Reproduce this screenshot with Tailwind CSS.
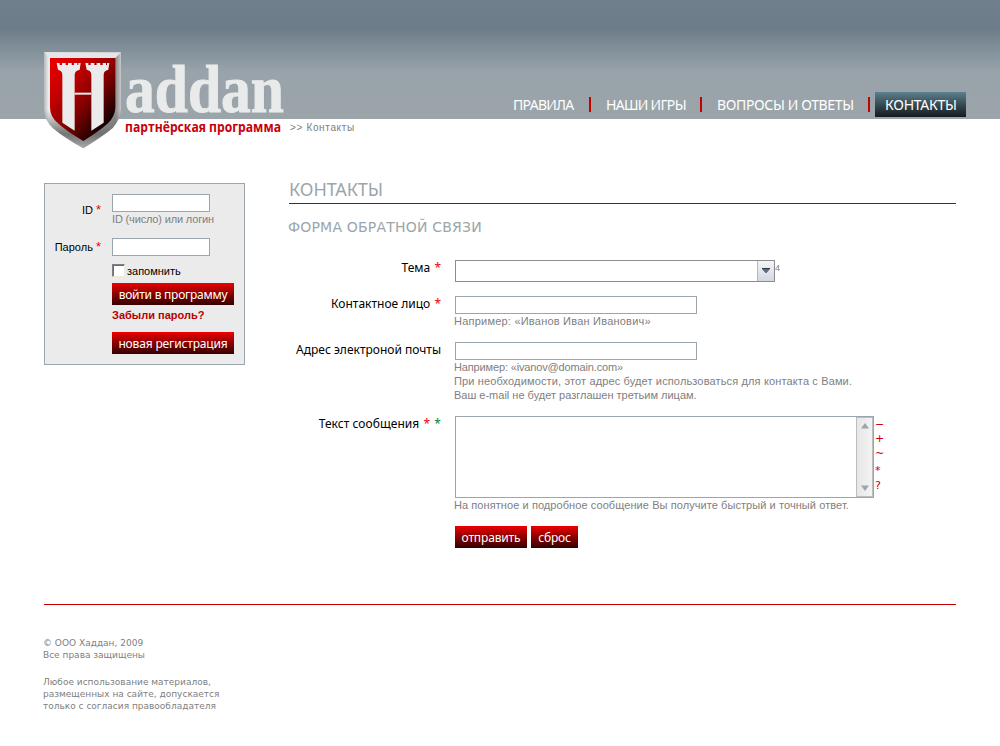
<!DOCTYPE html>
<html lang="ru">
<head>
<meta charset="utf-8">
<title>Хаддан — партнёрская программа</title>
<script src="https://cdn.jsdelivr.net/npm/@tailwindcss/browser@4"></script>
</head>
<body class="w-[1000px] h-[746px] overflow-hidden bg-white text-black whitespace-nowrap font-['Liberation_Sans',sans-serif] text-[11px]">

<header class="relative h-[119px] bg-[linear-gradient(to_bottom,#70808d_0%,#6c7d89_24%,#98a3ab_60%,#9aa3a9_78%,#9ba5a9_100%)]">
  <a class="absolute left-[40px] top-[48px] block" href="#">
    <svg width="246" height="104" viewBox="0 0 246 104" class="block overflow-visible">
      <defs>
        <linearGradient id="steel" x1="0" y1="0" x2="1" y2="0">
          <stop offset="0" stop-color="#b5b9bc"/><stop offset=".06" stop-color="#ececec"/><stop offset=".5" stop-color="#c4c4c4"/><stop offset=".93" stop-color="#8c8c8c"/><stop offset="1" stop-color="#c8c8c8"/>
        </linearGradient>
        <linearGradient id="steelDown" x1="0" y1="0" x2="0" y2="1">
          <stop offset=".6" stop-color="#777" stop-opacity="0"/><stop offset=".85" stop-color="#6a6a6a" stop-opacity=".9"/><stop offset="1" stop-color="#aaa"/>
        </linearGradient>
        <linearGradient id="enamel" x1=".1" y1="0" x2=".85" y2=".8">
          <stop offset="0" stop-color="#e60000"/><stop offset=".3" stop-color="#c40000"/><stop offset=".65" stop-color="#800000"/><stop offset="1" stop-color="#160000"/>
        </linearGradient>
      </defs>
      <g transform="translate(-10 -8) scale(.33333)">
        <path d="M42 37H273V205Q272 238 248 264Q222 286 160 325Q98 290 68 264Q42 240 42 205Z" fill="url(#steel)"/>
        <path d="M42 37H273V205Q272 238 248 264Q222 286 160 325Q98 290 68 264Q42 240 42 205Z" fill="url(#steelDown)"/>
        <path d="M42 37H273L256 54H60Z" fill="#e4e6e7"/>
        <path d="M60 54H256V202Q255 230 234 250Q210 272 160 303Q110 274 84 250Q60 230 60 202Z" fill="url(#enamel)"/>
        <g fill="#ebebeb">
          <path d="M80 69h9v6h7v-6h11v6h7v-6h11v6h7v-6h10v6h3v-6h7l-3 20Q134 92 134 105V272L97 248V105Q97 92 84 89Z"/>
          <path d="M166 69h9v6h7v-6h11v6h7v-6h11v6h7v-6h10v6h3v-6h7l-3 20Q221 92 221 105V248L184 272V105Q184 92 170 89Z"/>
          <path d="M134 158h50v6h-50z"/>
        </g>
      </g>
      <text x="85" y="64" textLength="159" lengthAdjust="spacingAndGlyphs" font-family="'Liberation Serif',serif" font-weight="700" font-size="68" fill="#e9eaea" stroke="#e9eaea" stroke-width="1">addan</text>
      <text x="85" y="84" textLength="156" lengthAdjust="spacingAndGlyphs" font-family="'Open Sans',sans-serif" font-weight="700" font-size="14" fill="#c60008">партнёрская программа</text>
    </svg>
  </a>
  <nav class="flex items-center h-[117px] pt-[92px] pl-[513px] text-white text-[14px] font-['Noto_Sans',sans-serif]">
    <a class="w-[76px] tracking-[-0.68px]">ПРАВИЛА</a>
    <i class="w-[2px] h-[15px] bg-[#c60000]"></i>
    <a class="w-[109px] pl-[15px] tracking-[-0.7px]">НАШИ ИГРЫ</a>
    <i class="w-[2px] h-[15px] bg-[#c60000]"></i>
    <a class="w-[166px] pl-[15px] tracking-[-0.37px]">ВОПРОСЫ И ОТВЕТЫ</a>
    <i class="w-[2px] h-[15px] bg-[#c60000]"></i>
    <a class="ml-[5px] w-[91px] h-[25px] leading-[26px] pl-[10px] tracking-[-0.24px] bg-linear-to-b from-[#5d808f] to-[#151c1f]">КОНТАКТЫ</a>
  </nav>
</header>

<div class="h-[64px] pl-[290px] pt-[2px] text-[10px] leading-[14px] text-[#808080] tracking-[0.65px]">&gt;&gt; Контакты</div>

<div class="flex pl-[44px] gap-[44px] h-[421px]">
  <aside class="w-[201px] h-[182px] border border-[#9ba5ab] bg-[#ebebeb] pt-[10px]">
    <div class="flex h-[44px]">
      <label class="w-[56px] mr-[11px] pt-[9px] leading-[14px] text-right">ID <span class="text-red-600 text-[13px]">*</span></label>
      <div>
        <input class="block w-[98px] h-[18px] bg-white border border-[#9ba5ab]">
        <p class="leading-[14px] text-[#808080] tracking-[-0.16px]">ID (число) или логин</p>
      </div>
    </div>
    <div class="flex h-[25px]">
      <label class="w-[56px] mr-[11px] pt-[2px] leading-[14px] text-right">Пароль <span class="text-red-600 text-[13px]">*</span></label>
      <input class="block w-[98px] h-[18px] bg-white border border-[#9ba5ab]">
    </div>
    <div class="flex items-center h-[20px] pl-[67px] pb-[6px] gap-[2px]">
      <i class="w-[13px] h-[13px] bg-white border border-t-[#808080] border-l-[#808080] border-r-[#ece9d8] border-b-[#ece9d8] shadow-[inset_1px_1px_#716f64]"></i>
      <span class="pt-[3px]">запомнить</span>
    </div>
    <div class="pl-[67px] font-['Noto_Sans',sans-serif]">
      <button class="block w-[122px] h-[22px] pt-px bg-linear-to-b from-[#ee0000] to-[#350000] text-white text-[12px] tracking-[-0.25px]">войти в программу</button>
      <p class="h-[27px] pt-[3px] leading-[14px] font-bold text-[11px] text-[#b80000] font-['Liberation_Sans',sans-serif]">Забыли пароль?</p>
      <button class="block w-[122px] h-[22px] pt-px bg-linear-to-b from-[#ee0000] to-[#350000] text-white text-[12px] tracking-[-0.15px]">новая регистрация</button>
    </div>
  </aside>

  <main class="w-[667px]">
    <h1 class="h-[21px] border-b border-[#a80010] leading-[13px] text-[18px] tracking-[-0.1px] text-[#9ba5ab] font-['Noto_Sans',sans-serif]">КОНТАКТЫ</h1>
    <h2 class="h-[56px] pt-[15px] -ml-px leading-[16px] text-[14px] tracking-[0.2px] text-[#9ba5ab] font-['DejaVu_Sans',sans-serif]">ФОРМА ОБРАТНОЙ СВЯЗИ</h2>
    <form class="text-[#808080] leading-[14px]">
      <div class="flex h-[36px]">
        <label class="w-[152px] mr-[14px] text-right text-black text-[12px] leading-[16px] font-['Noto_Sans',sans-serif]">Тема <span class="text-red-600 ml-px">*</span></label>
        <div class="flex w-[320px] h-[22px] bg-white border border-[#8c8c8c] justify-end">
          <span class="flex items-center justify-center w-[17px] border-l border-[#a9b7d1] bg-linear-to-b from-[#f4f5f8] to-[#d3d7e0]">
            <svg width="8" height="6" viewBox="0 0 8 6"><path d="M0 0h8v1L4.500 5h-1L0 1z" fill="#56698c"/><path d="M0 0h8v1H0z" fill="#33363f"/></svg>
          </span>
        </div>
        <span class="text-[9px] leading-[16px]">4</span>
      </div>
      <div class="flex h-[46px]">
        <label class="w-[152px] mr-[14px] text-right text-black text-[12px] leading-[16px] font-['Noto_Sans',sans-serif]">Контактное лицо <span class="text-red-600 ml-px">*</span></label>
        <div>
          <input class="block w-[242px] h-[18px] bg-white border border-[#9ba5ab]">
          <p class="-ml-px tracking-[0.22px]">Например: «Иванов Иван Иванович»</p>
        </div>
      </div>
      <div class="flex h-[74px]">
        <label class="w-[152px] mr-[14px] text-right text-black text-[12px] leading-[16px] font-['Noto_Sans',sans-serif]">Адрес электроной почты</label>
        <div>
          <input class="block w-[242px] h-[18px] bg-white border border-[#9ba5ab]">
          <p class="-ml-px tracking-[-0.15px]">Например: «ivanov@domain.com»</p>
          <p class="-ml-px tracking-[0.14px]">При необходимости, этот адрес будет использоваться для контакта с Вами.</p>
          <p class="-ml-px">Ваш e-mail не будет разглашен третьим лицам.</p>
        </div>
      </div>
      <div class="flex h-[110px]">
        <label class="w-[152px] mr-[14px] text-right text-black text-[12px] leading-[16px] tracking-[0.05px] font-['Noto_Sans',sans-serif]">Текст сообщения <span class="text-red-600 ml-px">*</span> <span class="text-green-700 ml-px">*</span></label>
        <div>
          <div class="flex">
            <div class="flex justify-end w-[419px] h-[82px] bg-white border border-[#9ba5ab]">
              <div class="flex flex-col justify-between items-center w-[17px] py-[5px] border border-[#bdbdbd] bg-linear-to-r from-[#e6e6e6] to-[#f4f4f4]">
                <svg width="8" height="6" viewBox="0 0 8 6"><path d="M4 0l4 5.500H0z" fill="#9da4ad"/></svg>
                <svg width="8" height="6" viewBox="0 0 8 6"><path d="M0 .5h8L4 6z" fill="#9da4b8"/></svg>
              </div>
            </div>
            <div class="flex flex-col pl-px pt-px text-[11px] leading-[15px] text-[#c60000] font-['DejaVu_Sans',sans-serif]">
              <span class="h-[14px]">−</span><span class="h-[15px]">+</span><span class="h-[16px]">~</span><span class="h-[15px] pt-px">*</span><span class="pt-px">?</span>
            </div>
          </div>
          <p class="-ml-px tracking-[0.075px]">На понятное и подробное сообщение Вы получите быстрый и точный ответ.</p>
        </div>
      </div>
      <div class="flex gap-[4px] pl-[166px] text-white text-[12px] tracking-[-0.15px] font-['Noto_Sans',sans-serif]">
        <button type="button" class="w-[72px] h-[22px] pt-[2px] bg-linear-to-b from-[#ee0000] to-[#350000]">отправить</button>
        <button type="button" class="w-[47px] h-[22px] pt-[2px] bg-linear-to-b from-[#ee0000] to-[#350000]">сброс</button>
      </div>
    </form>
  </main>
</div>

<footer class="ml-[44px] w-[912px] border-t border-[#c60000] pt-[32px] text-[9px] leading-[12px] text-[#808080] font-['DejaVu_Sans',sans-serif]">
  <p class="mb-[15px] -ml-px">© ООО Хаддан, 2009<br>Все права защищены</p>
  <p class="-ml-px">Любое использование материалов,<br>размещенных на сайте, допускается<br>только с согласия правообладателя</p>
</footer>
</body>
</html>
